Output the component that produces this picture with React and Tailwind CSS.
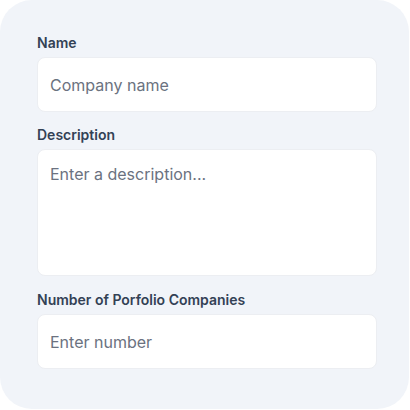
import React from 'react';

const FONT = { fontFamily: 'Inter, "Noto Sans", sans-serif' };

export default function App() {
  return (
    <div className="w-[410px] h-[410px] bg-white" style={FONT}>
      <div className="w-[409px] h-[409px] bg-[#f1f4f9] rounded-[32px] pl-[37px] pr-[32px] pt-[33px]">
        <label className="block text-sm leading-5 font-semibold text-[#334155]">Name</label>
        <input
          className="mt-1 block w-full h-[55px] rounded-lg border border-[#eceef2] bg-white px-3 text-base text-[#334155] placeholder:text-[#6b7280] outline-none"
          placeholder="Company name"
        />

        <label className="mt-[13px] block text-sm leading-5 font-semibold text-[#334155]">Description</label>
        <textarea
          className="mt-1 block w-full h-[127px] resize-none rounded-lg border border-[#eceef2] bg-white px-3 py-3 text-base leading-6 text-[#334155] placeholder:text-[#6b7280] outline-none"
          placeholder="Enter a description..."
        />

        <label className="mt-[14px] block text-sm leading-5 font-semibold text-[#334155]">Number of Porfolio Companies</label>
        <input
          className="mt-1 block w-full h-[55px] rounded-lg border border-[#eceef2] bg-white px-3 text-base text-[#334155] placeholder:text-[#6b7280] outline-none"
          placeholder="Enter number"
        />
      </div>
    </div>
  );
}
